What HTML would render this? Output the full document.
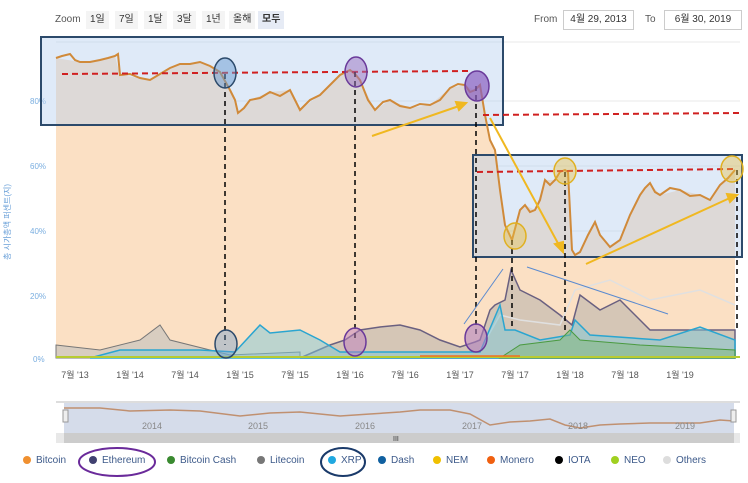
<!DOCTYPE html>
<html><head><meta charset="utf-8"><style>
body{margin:0;width:748px;height:483px;background:#fff;font-family:"Liberation Sans","Noto Sans CJK KR",sans-serif;overflow:hidden;position:relative}
.t{position:absolute;font-size:10px;color:#555}
.b{position:absolute;top:11px;height:18px;line-height:18px;font-size:10px;background:#f4f4f4;color:#333;padding:0 4px}
.in{position:absolute;top:10px;height:18px;border:1px solid #ccc;font-size:10px;line-height:18px;text-align:center;color:#333}
.lg{position:absolute;top:455px;font-size:10px;color:#3d5a8a}
.dot{display:inline-block;width:8px;height:8px;border-radius:50%;margin-right:5px;vertical-align:-1px}
</style></head><body>
<div class="t" style="left:55px;top:14px">Zoom</div>
<div class="b" style="left:86px">1일</div><div class="b" style="left:115px">7일</div><div class="b" style="left:144px">1달</div><div class="b" style="left:173px">3달</div><div class="b" style="left:202px">1년</div><div class="b" style="left:229px">올해</div><div class="b" style="left:258px;background:#e6ebf5;font-weight:bold">모두</div>
<div class="t" style="left:534px;top:14px">From</div><div class="in" style="left:563px;width:69px">4월 29, 2013</div>
<div class="t" style="left:645px;top:14px">To</div><div class="in" style="left:664px;width:76px">6월 30, 2019</div>
<div style="position:absolute;left:2px;transform:rotate(-90deg);transform-origin:0 0;font-size:8px;color:#6aa0d8;width:0;white-space:nowrap;top:260px">총 시가총액 퍼센트(지)</div>
<svg width="748" height="483" style="position:absolute;left:0;top:0">
<g stroke="#e8e8e8"><line x1="56" x2="740" y1="42" y2="42"/><line x1="56" x2="740" y1="101" y2="101"/><line x1="56" x2="740" y1="166" y2="166"/><line x1="56" x2="740" y1="231" y2="231"/><line x1="56" x2="740" y1="296" y2="296"/></g>
<g font-size="8" fill="#7aaee0"><text x="30" y="104">80%</text><text x="30" y="169">60%</text><text x="30" y="234">40%</text><text x="30" y="299">20%</text><text x="33" y="362">0%</text></g>
<polygon fill="#fbe0c4" points="56,58 80,62 100,60 115,56 120,75 150,80 180,64 200,62 220,72 230,90 238,113 250,100 270,92 290,90 300,110 320,95 340,75 350,70 360,80 375,110 390,100 410,108 430,105 450,88 465,85 475,90 480,85 485,115 490,140 495,150 505,225 512,240 520,210 525,205 535,210 545,180 555,180 565,170 568,172 572,250 575,255 580,252 595,222 600,235 610,247 620,240 640,195 650,183 660,195 680,190 700,195 710,200 720,185 735,170 735,358 56,358"/>
<polygon fill="#bdb4ad" fill-opacity=".6" stroke="#6a6080" stroke-width="1.5" points="300,358 330,345 345,340 360,330 380,327 400,325 420,330 440,340 460,347 475,342 480,340 490,310 495,305 505,300 511,270 520,290 540,300 560,315 572,325 580,295 600,310 620,300 650,330 700,330 735,330 735,358"/>
<polyline fill="none" stroke="#e0e0e0" stroke-width="1.5" points="480,350 500,315 520,320 560,325 575,290 610,280 650,300 700,290 735,305"/>
<polygon fill="#9ab" fill-opacity=".35" stroke="#777" points="56,345 100,350 140,340 160,325 170,340 230,355 300,352 300,358 56,358"/>
<polygon fill="#7ec8d8" fill-opacity=".5" stroke="#2aa5d0" stroke-width="1.5" points="90,358 120,350 200,350 235,352 260,325 270,333 300,330 320,340 340,352 480,352 500,305 505,330 515,330 540,340 570,335 575,320 590,335 660,340 700,327 735,340 735,358"/>
<polygon fill="#7db87a" fill-opacity=".5" stroke="#4a9a40" points="500,358 520,345 560,340 570,330 580,340 640,345 735,350 735,358"/>
<line x1="56" x2="740" y1="357" y2="357" stroke="#b8cc30" stroke-width="2"/>
<line x1="420" x2="520" y1="356" y2="356" stroke="#f07020" stroke-width="1.5"/>
<rect x="41" y="37" width="462" height="88" fill="#b8d0f0" fill-opacity=".45" stroke="#2c4a6b" stroke-width="2"/>
<rect x="473" y="155" width="269" height="102" fill="#b8d0f0" fill-opacity=".45" stroke="#2c4a6b" stroke-width="2"/>
<polyline fill="none" stroke="#d08a3a" stroke-width="2" points="56,58 62,56 70,54 75,60 80,62 90,62 100,60 108,58 115,56 118,54 120,75 130,74 140,78 150,80 160,74 170,68 180,64 190,64 200,62 210,66 220,72 230,90 235,100 238,113 244,108 250,100 260,98 270,92 280,96 290,90 295,100 300,110 310,100 320,95 330,85 340,75 350,70 355,74 360,80 368,100 375,110 383,102 390,100 400,106 410,108 420,104 430,105 440,100 450,88 458,84 465,85 470,92 475,90 480,85 485,115 490,140 495,150 500,190 505,225 512,240 520,210 525,205 530,212 535,210 540,200 545,180 550,185 555,180 560,172 565,170 568,172 572,250 575,255 580,252 588,235 595,222 600,235 610,247 620,240 630,215 640,195 645,188 650,183 655,192 660,195 670,188 680,190 690,196 700,195 710,200 720,185 728,178 735,170"/>
<g stroke="#d02020" stroke-width="2" stroke-dasharray="6,4"><line x1="62" x2="470" y1="74" y2="71"/><line x1="483" x2="740" y1="115" y2="113"/><line x1="477" x2="735" y1="172" y2="169"/></g>
<g stroke="#000" stroke-width="1.5" stroke-dasharray="5,4"><line x1="225" x2="225" y1="74" y2="345"/><line x1="355" x2="355" y1="72" y2="340"/><line x1="476" x2="476" y1="86" y2="338"/><line x1="512" x2="512" y1="240" y2="330"/><line x1="565" x2="565" y1="172" y2="330"/><line x1="737" x2="737" y1="170" y2="330"/></g>
<g stroke-width="1.5"><ellipse cx="225" cy="73" rx="11" ry="15" fill="#6a9ad0" fill-opacity=".5" stroke="#2c4a6b"/><ellipse cx="356" cy="72" rx="11" ry="15" fill="#9a70c0" fill-opacity=".5" stroke="#6a3a9a"/><ellipse cx="477" cy="86" rx="12" ry="15" fill="#8a60c0" fill-opacity=".7" stroke="#6a3a9a"/><ellipse cx="226" cy="344" rx="11" ry="14" fill="#6a9ad0" fill-opacity=".4" stroke="#2c4a6b"/><ellipse cx="355" cy="342" rx="11" ry="14" fill="#c080c0" fill-opacity=".5" stroke="#6a3a9a"/><ellipse cx="476" cy="338" rx="11" ry="14" fill="#b080c0" fill-opacity=".6" stroke="#6a3a9a"/><ellipse cx="515" cy="236" rx="11" ry="13" fill="#e8c040" fill-opacity=".4" stroke="#e0b020"/><ellipse cx="565" cy="171" rx="11" ry="13" fill="#e8c040" fill-opacity=".4" stroke="#e0b020"/><ellipse cx="732" cy="169" rx="11" ry="13" fill="#e8c040" fill-opacity=".4" stroke="#e0b020"/></g>
<g stroke="#f0b820" stroke-width="2" fill="#f0b820"><line x1="372" y1="136" x2="462" y2="105"/><polygon points="466,103 456,102 459,110"/><line x1="490" y1="118" x2="560" y2="247"/><polygon points="563,252 555,244 563,242"/><line x1="586" y1="264" x2="732" y2="197"/><polygon points="737,195 727,194 730,202"/></g>
<g stroke="#5a8ad0" stroke-width="1" fill="none"><line x1="464" y1="324" x2="503" y2="269"/><line x1="527" y1="267" x2="668" y2="314"/></g>
<g font-size="9" fill="#555" text-anchor="middle"><text x="75" y="378">7월 '13</text><text x="130" y="378">1월 '14</text><text x="185" y="378">7월 '14</text><text x="240" y="378">1월 '15</text><text x="295" y="378">7월 '15</text><text x="350" y="378">1월 '16</text><text x="405" y="378">7월 '16</text><text x="460" y="378">1월 '17</text><text x="515" y="378">7월 '17</text><text x="570" y="378">1월 '18</text><text x="625" y="378">7월 '18</text><text x="680" y="378">1월 '19</text></g>
<line x1="56" x2="740" y1="402" y2="402" stroke="#ddd" stroke-width="2"/>
<rect x="64" y="403" width="670" height="30" fill="#d5dcea"/>
<polyline fill="none" stroke="#c09070" stroke-width="1.5" points="64,408 100,408 130,411 170,410 200,411 240,416 270,413 300,412 340,416 370,414 400,412 420,410 450,410 470,414 490,425 510,422 530,421 550,419 565,425 580,428 600,425 620,424 650,423 700,423 720,420 734,421"/>
<g font-size="9" fill="#888"><text x="142" y="429">2014</text><text x="248" y="429">2015</text><text x="355" y="429">2016</text><text x="462" y="429">2017</text><text x="568" y="429">2018</text><text x="675" y="429">2019</text></g>
<rect x="63" y="410" width="5" height="12" fill="#eee" stroke="#999"/><rect x="731" y="410" width="5" height="12" fill="#eee" stroke="#999"/>
<rect x="56" y="433" width="684" height="10" fill="#e8e8e8"/><rect x="64" y="433" width="670" height="10" fill="#ccc"/>
<text x="393" y="441" font-size="7" fill="#333">III</text>
<ellipse cx="117" cy="462" rx="38" ry="14" fill="none" stroke="#6a2a9a" stroke-width="2"/>
<ellipse cx="343" cy="462" rx="22" ry="14" fill="none" stroke="#1a3a6a" stroke-width="2"/>
</svg>
<div class="lg" style="left:23px"><span class="dot" style="background:#f09030"></span>Bitcoin</div>
<div class="lg" style="left:89px"><span class="dot" style="background:#404070"></span>Ethereum</div>
<div class="lg" style="left:167px"><span class="dot" style="background:#3a8a30"></span>Bitcoin Cash</div>
<div class="lg" style="left:257px"><span class="dot" style="background:#777"></span>Litecoin</div>
<div class="lg" style="left:328px"><span class="dot" style="background:#20a8e0"></span>XRP</div>
<div class="lg" style="left:378px"><span class="dot" style="background:#1060a0"></span>Dash</div>
<div class="lg" style="left:433px"><span class="dot" style="background:#f0c000"></span>NEM</div>
<div class="lg" style="left:487px"><span class="dot" style="background:#f06010"></span>Monero</div>
<div class="lg" style="left:555px"><span class="dot" style="background:#000"></span>IOTA</div>
<div class="lg" style="left:611px"><span class="dot" style="background:#a0d020"></span>NEO</div>
<div class="lg" style="left:663px"><span class="dot" style="background:#ddd"></span>Others</div>
</body></html>
